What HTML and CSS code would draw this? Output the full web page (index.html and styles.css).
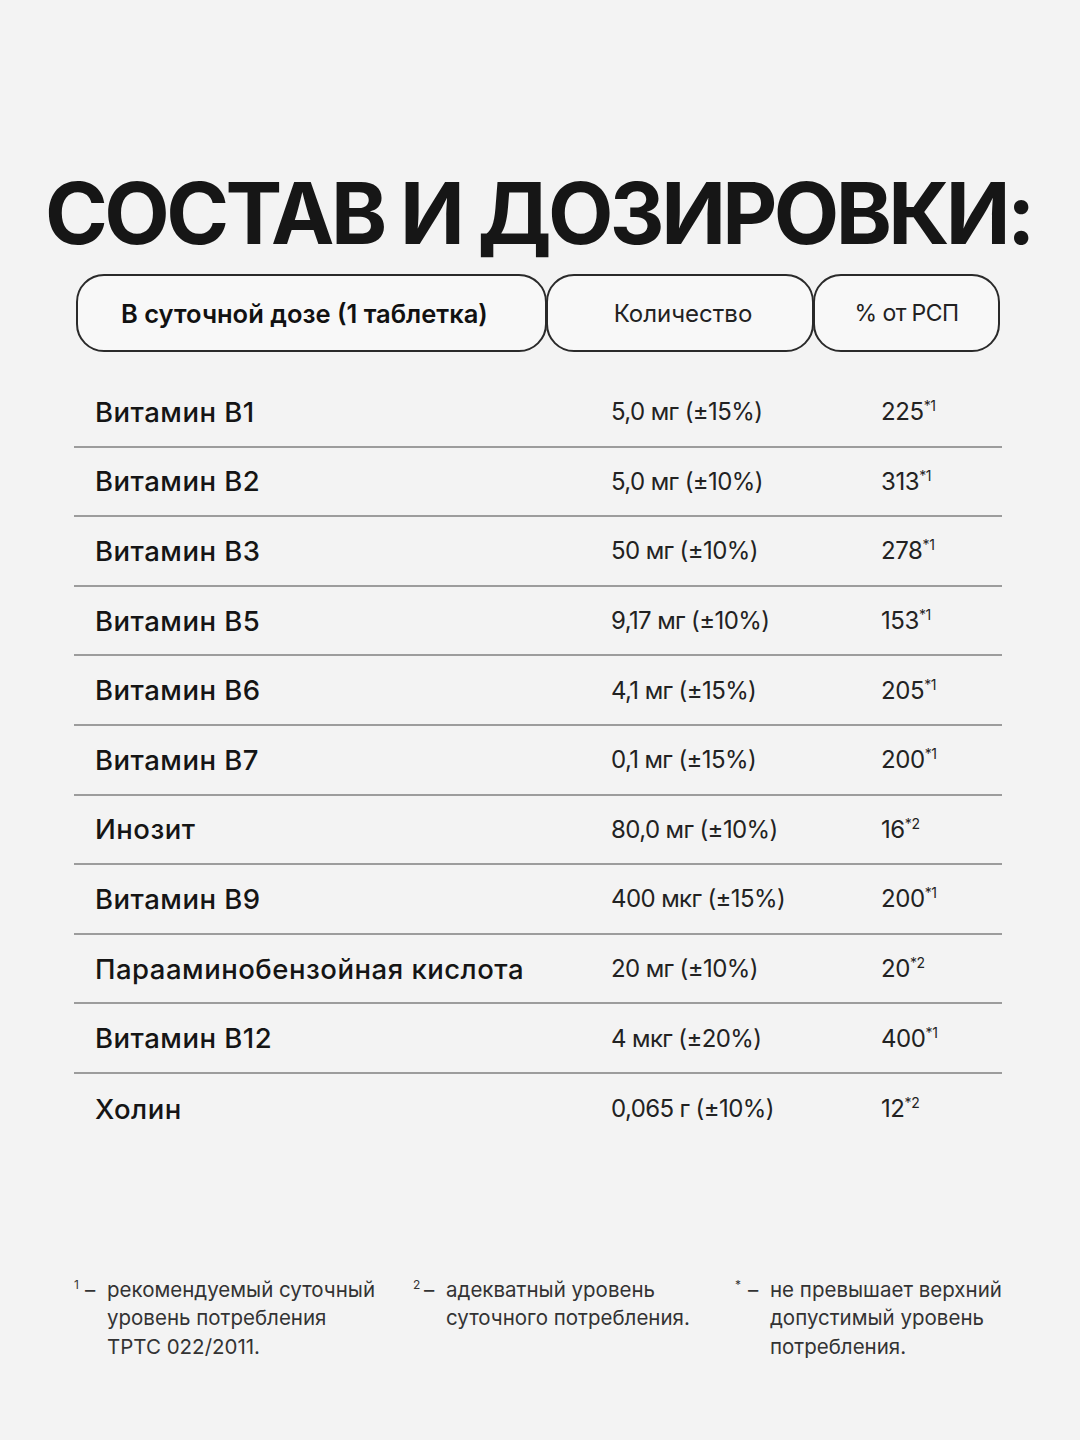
FILE: index.html
```html
<!DOCTYPE html>
<html lang="ru">
<head>
<meta charset="utf-8">
<link rel="stylesheet" href="styles.css">
</head>
<body>
<main class="page">
  <h1 class="title">СОСТАВ И ДОЗИРОВКИ:</h1>
  <div class="head">
    <div class="pill pill-name">В суточной дозе (1 таблетка)</div>
    <div class="pill pill-amt">Количество</div>
    <div class="pill pill-pct">% от РСП</div>
  </div>
  <div class="rows">
    <div class="row"><span class="name">Витамин B1</span><span class="amt">5,0 мг (±15%)</span><span class="pct">225<sup>*1</sup></span></div>
    <div class="row"><span class="name">Витамин B2</span><span class="amt">5,0 мг (±10%)</span><span class="pct">313<sup>*1</sup></span></div>
    <div class="row"><span class="name">Витамин B3</span><span class="amt">50 мг (±10%)</span><span class="pct">278<sup>*1</sup></span></div>
    <div class="row"><span class="name">Витамин B5</span><span class="amt">9,17 мг (±10%)</span><span class="pct">153<sup>*1</sup></span></div>
    <div class="row"><span class="name">Витамин B6</span><span class="amt">4,1 мг (±15%)</span><span class="pct">205<sup>*1</sup></span></div>
    <div class="row"><span class="name">Витамин B7</span><span class="amt">0,1 мг (±15%)</span><span class="pct">200<sup>*1</sup></span></div>
    <div class="row"><span class="name">Инозит</span><span class="amt">80,0 мг (±10%)</span><span class="pct">16<sup>*2</sup></span></div>
    <div class="row"><span class="name">Витамин B9</span><span class="amt">400 мкг (±15%)</span><span class="pct">200<sup>*1</sup></span></div>
    <div class="row"><span class="name">Парааминобензойная кислота</span><span class="amt">20 мг (±10%)</span><span class="pct">20<sup>*2</sup></span></div>
    <div class="row"><span class="name">Витамин B12</span><span class="amt">4 мкг (±20%)</span><span class="pct">400<sup>*1</sup></span></div>
    <div class="row"><span class="name">Холин</span><span class="amt">0,065 г (±10%)</span><span class="pct">12<sup>*2</sup></span></div>
  </div>
  <div class="notes">
    <div class="note n1"><span class="mark">1</span><span class="dash">–</span><span class="txt">рекомендуемый суточный<br>уровень потребления<br>ТРТС 022/2011.</span></div>
    <div class="note n2"><span class="mark">2</span><span class="dash">–</span><span class="txt">адекватный уровень<br>суточного потребления.</span></div>
    <div class="note n3"><span class="mark">*</span><span class="dash">–</span><span class="txt">не превышает верхний<br>допустимый уровень<br>потребления.</span></div>
  </div>
</main>
</body>
</html>
```
FILE: styles.css
```css
html, body {
  margin: 0;
  padding: 0;
  background: #f3f3f3;
}
body {
  font-family: "Inter", "Liberation Sans", sans-serif;
  color: #1a1a1a;
  width: 1080px;
  height: 1440px;
  overflow: hidden;
}
.page {
  padding-top: 166px;
}
.title {
  margin: 0;
  padding-left: 45px;
  font-size: 85px;
  font-weight: 700;
  letter-spacing: -3.6px;
  line-height: 96px;
  color: #161616;
  white-space: nowrap;
}
.head {
  display: flex;
  margin: 12px 0 0 76px;
  height: 78px;
}
.pill {
  box-sizing: border-box;
  height: 78px;
  border: 2px solid #2a2a2a;
  border-radius: 28px;
  background: #f8f8f8;
  display: flex;
  align-items: center;
  font-size: 24px;
  color: #222;
}
.pill-name {
  width: 471px;
  padding-left: 43px;
  font-size: 25.5px;
  font-weight: 600;
  color: #111;
}
.pill-amt {
  width: 268px;
  justify-content: center;
  font-weight: 400;
  margin-left: -1px;
  padding-left: 6px;
}
.pill-pct {
  width: 187px;
  justify-content: center;
  font-weight: 400;
  margin-left: -1px;
  letter-spacing: -0.6px;
  font-size: 23px;
}
.rows {
  margin: 26px 0 0 74px;
  width: 928px;
}
.row {
  display: flex;
  align-items: center;
  height: 69.6px;
  box-sizing: border-box;
  border-bottom: 2px solid #9c9c9c;
  font-size: 27.5px;
}
.row:last-child {
  border-bottom: none;
}
.name {
  width: 516px;
  padding-left: 21px;
  font-weight: 500;
  letter-spacing: 0.5px;
  color: #151515;
}
.amt {
  width: 270px;
  font-weight: 400;
  color: #222;
  font-size: 24px;
  letter-spacing: -0.6px;
}
.pct {
  font-weight: 400;
  color: #222;
  font-size: 24px;
  letter-spacing: -0.4px;
}
.pct sup {
  font-size: 14px;
  vertical-align: 9px;
  line-height: 0;
}
.notes {
  display: flex;
  margin: 132px 0 0 74px;
  font-size: 20.5px;
  line-height: 28.5px;
  color: #333;
}
.note {
  display: flex;
}
.mark {
  font-size: 12px;
  line-height: 18px;
  width: 11px;
}
.dash {
  width: 22px;
}
.n1 { width: 339px; }
.n2 { width: 322px; }
.n3 { width: 280px; }
.n3 .mark { width: 13px; }
```
